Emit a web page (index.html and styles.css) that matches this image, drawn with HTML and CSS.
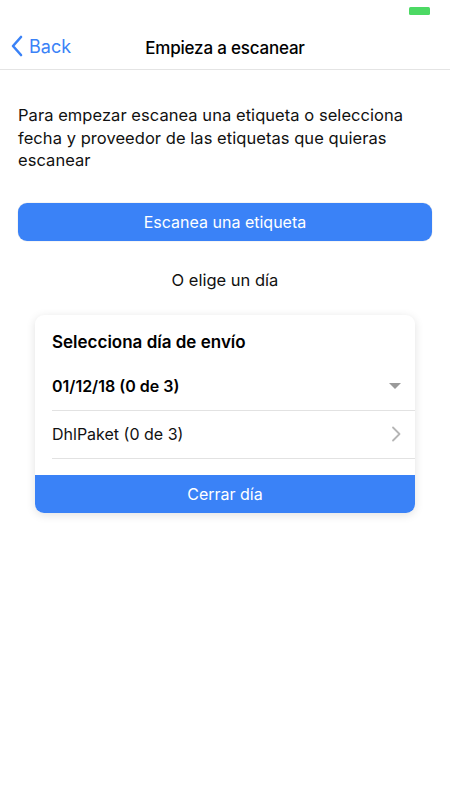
FILE: index.html
```html
<!DOCTYPE html>
<html lang="es">
<head>
<meta charset="utf-8">
<link rel="stylesheet" href="styles.css">
</head>
<body>
<div class="status"><span class="battery"></span></div>
<header class="nav">
  <a class="back">
    <svg width="14" height="22" viewBox="0 0 14 22"><path d="M11 2 L3 11 L11 20" fill="none" stroke="#3a82f7" stroke-width="2.6" stroke-linecap="round" stroke-linejoin="round"/></svg>
    <span>Back</span>
  </a>
  <h1 class="title">Empieza a escanear</h1>
</header>
<main class="content">
  <p class="intro">Para empezar escanea una etiqueta o selecciona fecha y proveedor de las etiquetas que quieras escanear</p>
  <button class="primary">Escanea una etiqueta</button>
  <p class="or">O elige un día</p>
  <section class="card">
    <h2 class="card-title">Selecciona día de envío</h2>
    <div class="row date">
      <span>01/12/18 (0 de 3)</span>
      <svg width="12" height="8" viewBox="0 0 12 8"><path d="M0 1 L12 1 L6 7 Z" fill="#9a9a9a"/></svg>
    </div>
    <div class="row provider">
      <span>DhlPaket (0 de 3)</span>
      <svg width="10" height="16" viewBox="0 0 10 16"><path d="M2 1.5 L8.5 8 L2 14.5" fill="none" stroke="#b5b5b5" stroke-width="1.8" stroke-linecap="round" stroke-linejoin="round"/></svg>
    </div>
    <div class="spacer"></div>
    <button class="close">Cerrar día</button>
  </section>
</main>
</body>
</html>
```
FILE: styles.css
```css
* { box-sizing: border-box; }
html, body { margin: 0; padding: 0; background: #fff; }
body {
  font-family: "Inter", "Liberation Sans", sans-serif;
  color: #111;
  width: 450px;
  height: 800px;
  overflow: hidden;
}
.status {
  height: 26px;
  display: flex;
  justify-content: flex-end;
  padding: 7px 20px 0 0;
}
.battery {
  width: 21px;
  height: 8px;
  background: #4cd964;
  border-radius: 1.5px;
}
.nav {
  height: 44px;
  border-bottom: 1px solid #e4e4e4;
  display: flex;
  align-items: center;
  justify-content: center;
  position: relative;
}
.back {
  position: absolute;
  left: 10px;
  top: 9px;
  display: flex;
  align-items: center;
  gap: 5px;
  color: #3a82f7;
  font-size: 18px;
}
.title {
  margin: 0;
  font-size: 17px;
  font-weight: 500;
  color: #000;
  letter-spacing: -0.2px;
}
.content {
  padding: 0 18px;
  display: flex;
  flex-direction: column;
}
.intro {
  margin: 34px 0 0;
  font-size: 16.5px;
  line-height: 22.5px;
  color: #111;
  letter-spacing: 0.05px;
}
.primary {
  margin-top: 31px;
  height: 38px;
  border: none;
  border-radius: 9px;
  background: #3a82f7;
  color: #fff;
  font-family: inherit;
  font-size: 16px;
  box-shadow: 0 0 0 0.5px rgba(0,0,0,0.08);
}
.or {
  margin: 28px 0 0;
  text-align: center;
  font-size: 16.5px;
  line-height: 22px;
  color: #111;
}
.card {
  margin: 24px 17px 0;
  background: #fff;
  border-radius: 9px;
  box-shadow: 0 2px 10px rgba(0,0,0,0.12);
  overflow: hidden;
  padding-left: 17px;
}
.card-title {
  margin: 0;
  padding-top: 16px;
  font-size: 17px;
  font-weight: 600;
  line-height: 22px;
  color: #000;
}
.row {
  display: flex;
  align-items: center;
  justify-content: space-between;
  padding-right: 14px;
  border-bottom: 1px solid #e2e2e2;
  font-size: 16px;
}
.date {
  height: 49px;
  margin-top: 9px;
  font-weight: 600;
  color: #000;
}
.provider {
  height: 48px;
  color: #111;
}
.spacer { height: 16px; }
.close {
  display: block;
  width: calc(100% + 17px);
  margin-left: -17px;
  height: 38px;
  border: none;
  background: #3a82f7;
  color: #fff;
  font-family: inherit;
  font-size: 16px;
}
```
